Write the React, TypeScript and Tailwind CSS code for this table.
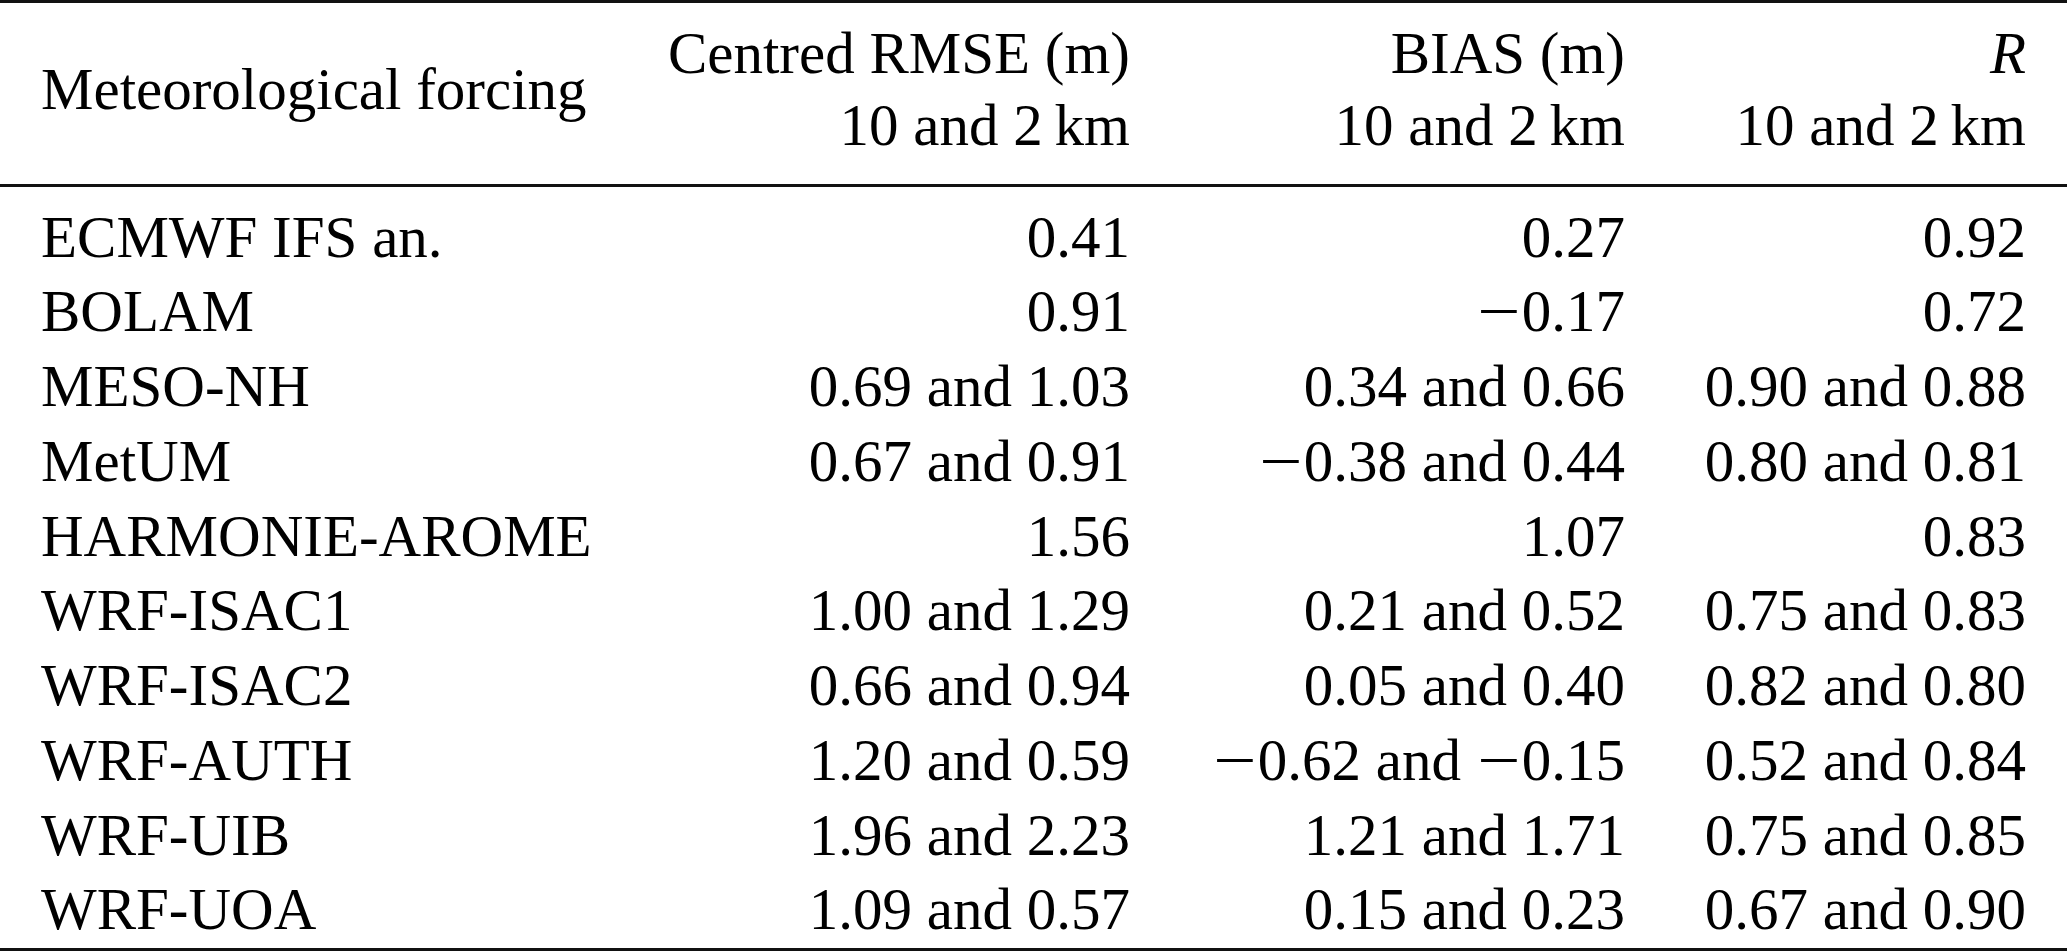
import React from "react";

type Row = [string, string, string, string];

const rows: Row[] = [
  ["ECMWF IFS an.", "0.41", "0.27", "0.92"],
  ["BOLAM", "0.91", "\u22120.17", "0.72"],
  ["MESO-NH", "0.69 and 1.03", "0.34 and 0.66", "0.90 and 0.88"],
  ["MetUM", "0.67 and 0.91", "\u22120.38 and 0.44", "0.80 and 0.81"],
  ["HARMONIE-AROME", "1.56", "1.07", "0.83"],
  ["WRF-ISAC1", "1.00 and 1.29", "0.21 and 0.52", "0.75 and 0.83"],
  ["WRF-ISAC2", "0.66 and 0.94", "0.05 and 0.40", "0.82 and 0.80"],
  ["WRF-AUTH", "1.20 and 0.59", "\u22120.62 and \u22120.15", "0.52 and 0.84"],
  ["WRF-UIB", "1.96 and 2.23", "1.21 and 1.71", "0.75 and 0.85"],
  ["WRF-UOA", "1.09 and 0.57", "0.15 and 0.23", "0.67 and 0.90"],
];

function Num({ text }: { text: string }) {
  const parts = text.split("\u2212");
  return (
    <>
      {parts.map((p, i) => (
        <React.Fragment key={i}>
          {i > 0 && (
            <span className="inline-block w-[46px] text-center scale-x-[1.3]">
              {"\u2212"}
            </span>
          )}
          {p}
        </React.Fragment>
      ))}
    </>
  );
}

const gridCols = "grid grid-cols-[599px_490px_495px_401px] px-[41px]";

export default function App() {
  return (
    <div
      className="w-[2067px] h-[951px] bg-white text-black text-[59px] leading-[72.33px] flex flex-col"
      style={{ fontFamily: '"Liberation Serif", "Times New Roman", serif' }}
    >
      <div className="h-[3px] bg-[#111]" />
      <div className={`${gridCols} pt-[14px] pb-[22px]`}>
        <div className="self-center whitespace-nowrap">Meteorological forcing</div>
        <div className="text-right whitespace-nowrap">
          <div>Centred RMSE (m)</div>
          <div>10 and 2{"\u2009"}km</div>
        </div>
        <div className="text-right whitespace-nowrap">
          <div>BIAS (m)</div>
          <div>10 and 2{"\u2009"}km</div>
        </div>
        <div className="text-right whitespace-nowrap">
          <div className="italic">R</div>
          <div>10 and 2{"\u2009"}km</div>
        </div>
      </div>
      <div className="h-[3px] bg-[#111]" />
      <div className={`${gridCols} pt-[14px] flex-1`}>
        {rows.map((r) => (
          <React.Fragment key={r[0]}>
            <div className="whitespace-nowrap">{r[0]}</div>
            <div className="text-right whitespace-nowrap">
              <Num text={r[1]} />
            </div>
            <div className="text-right whitespace-nowrap">
              <Num text={r[2]} />
            </div>
            <div className="text-right whitespace-nowrap">
              <Num text={r[3]} />
            </div>
          </React.Fragment>
        ))}
      </div>
      <div className="h-[3px] bg-[#111]" />
    </div>
  );
}
